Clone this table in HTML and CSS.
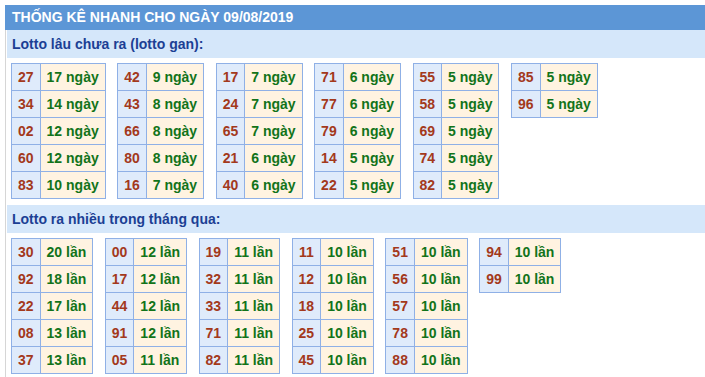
FILE: index.html
```html
<!DOCTYPE html>
<html lang="vi">
<head>
<meta charset="utf-8">
<title>Thống kê nhanh</title>
<link rel="stylesheet" href="styles.css">
</head>
<body>
<div class="page">
  <div class="title">THỐNG KÊ NHANH CHO NGÀY 09/08/2019</div>
  <div class="box">
    <div class="sub">Lotto lâu chưa ra (lotto gan):</div>
    <div class="tables">
      <table><tr><td class="n">27</td><td class="v">17 ngày</td></tr><tr><td class="n">34</td><td class="v">14 ngày</td></tr><tr><td class="n">02</td><td class="v">12 ngày</td></tr><tr><td class="n">60</td><td class="v">12 ngày</td></tr><tr><td class="n">83</td><td class="v">10 ngày</td></tr></table>
      <table><tr><td class="n">42</td><td class="v">9 ngày</td></tr><tr><td class="n">43</td><td class="v">8 ngày</td></tr><tr><td class="n">66</td><td class="v">8 ngày</td></tr><tr><td class="n">80</td><td class="v">8 ngày</td></tr><tr><td class="n">16</td><td class="v">7 ngày</td></tr></table>
      <table><tr><td class="n">17</td><td class="v">7 ngày</td></tr><tr><td class="n">24</td><td class="v">7 ngày</td></tr><tr><td class="n">65</td><td class="v">7 ngày</td></tr><tr><td class="n">21</td><td class="v">6 ngày</td></tr><tr><td class="n">40</td><td class="v">6 ngày</td></tr></table>
      <table><tr><td class="n">71</td><td class="v">6 ngày</td></tr><tr><td class="n">77</td><td class="v">6 ngày</td></tr><tr><td class="n">79</td><td class="v">6 ngày</td></tr><tr><td class="n">14</td><td class="v">5 ngày</td></tr><tr><td class="n">22</td><td class="v">5 ngày</td></tr></table>
      <table><tr><td class="n">55</td><td class="v">5 ngày</td></tr><tr><td class="n">58</td><td class="v">5 ngày</td></tr><tr><td class="n">69</td><td class="v">5 ngày</td></tr><tr><td class="n">74</td><td class="v">5 ngày</td></tr><tr><td class="n">82</td><td class="v">5 ngày</td></tr></table>
      <table><tr><td class="n">85</td><td class="v">5 ngày</td></tr><tr><td class="n">96</td><td class="v">5 ngày</td></tr></table>
    </div>
    <div class="sub">Lotto ra nhiều trong tháng qua:</div>
    <div class="tables">
      <table><tr><td class="n">30</td><td class="v">20 lần</td></tr><tr><td class="n">92</td><td class="v">18 lần</td></tr><tr><td class="n">22</td><td class="v">17 lần</td></tr><tr><td class="n">08</td><td class="v">13 lần</td></tr><tr><td class="n">37</td><td class="v">13 lần</td></tr></table>
      <table><tr><td class="n">00</td><td class="v">12 lần</td></tr><tr><td class="n">17</td><td class="v">12 lần</td></tr><tr><td class="n">44</td><td class="v">12 lần</td></tr><tr><td class="n">91</td><td class="v">12 lần</td></tr><tr><td class="n">05</td><td class="v">11 lần</td></tr></table>
      <table><tr><td class="n">19</td><td class="v">11 lần</td></tr><tr><td class="n">32</td><td class="v">11 lần</td></tr><tr><td class="n">33</td><td class="v">11 lần</td></tr><tr><td class="n">71</td><td class="v">11 lần</td></tr><tr><td class="n">82</td><td class="v">11 lần</td></tr></table>
      <table><tr><td class="n">11</td><td class="v">10 lần</td></tr><tr><td class="n">12</td><td class="v">10 lần</td></tr><tr><td class="n">18</td><td class="v">10 lần</td></tr><tr><td class="n">25</td><td class="v">10 lần</td></tr><tr><td class="n">45</td><td class="v">10 lần</td></tr></table>
      <table><tr><td class="n">51</td><td class="v">10 lần</td></tr><tr><td class="n">56</td><td class="v">10 lần</td></tr><tr><td class="n">57</td><td class="v">10 lần</td></tr><tr><td class="n">78</td><td class="v">10 lần</td></tr><tr><td class="n">88</td><td class="v">10 lần</td></tr></table>
      <table><tr><td class="n">94</td><td class="v">10 lần</td></tr><tr><td class="n">99</td><td class="v">10 lần</td></tr></table>
    </div>
  </div>
</div>
</body>
</html>
```
FILE: styles.css
```css
html, body {
  margin: 0;
  padding: 0;
  background: #ffffff;
}
body {
  font-family: "Liberation Sans", Arial, sans-serif;
}
.page {
  padding: 5px 0 0 5px;
}
.title {
  height: 25px;
  line-height: 25px;
  background: #5c96d6;
  color: #ffffff;
  font-size: 14px;
  font-weight: bold;
  padding-left: 7px;
}
.box {
  border-left: 1px solid #d6d6d6;
  padding-left: 1px;
  padding-bottom: 4px;
}
.sub {
  height: 28px;
  line-height: 28px;
  background: #d5e7fa;
  color: #1c3f94;
  font-size: 14px;
  font-weight: bold;
  padding-left: 5px;
}
.tables {
  display: flex;
  align-items: flex-start;
  gap: 11.5px;
  padding: 5px 0 6px 4px;
}
table {
  border-collapse: collapse;
  font-size: 14px;
  font-weight: bold;
}
td {
  border: 1px solid #8fb0e6;
  height: 26px;
  padding: 0 6px;
  line-height: 16px;
  white-space: nowrap;
}
td.n {
  background: #dfebfb;
  color: #a3391c;
  text-align: center;
}
td.v {
  background: #fff3e1;
  color: #12731a;
}
```
